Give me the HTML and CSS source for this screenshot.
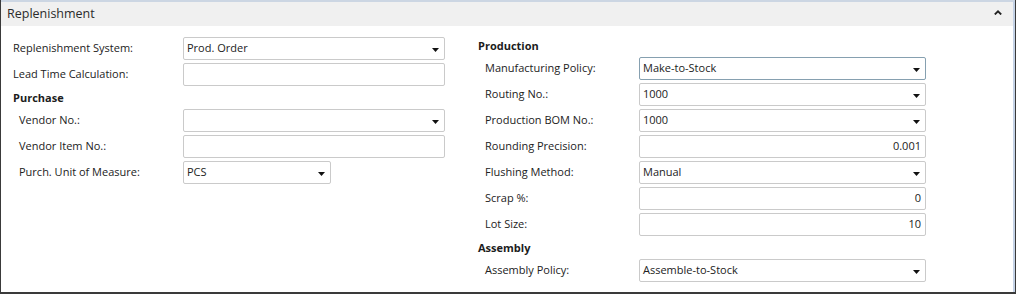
FILE: index.html
```html
<!DOCTYPE html>
<html lang="en">
<head>
	<meta charset="UTF-8">
	<title>Replenishment</title>
	<link rel="stylesheet" href="styles.css">
</head>
<body>
	<div class="frame">
	  <div class="panel">
		<div class="panel-head">
		  <span class="panel-title">Replenishment</span>
		  <svg class="chevron" width="8" height="5" viewBox="0 0 8 5"><path d="M0.8 4.5 L4 1.3 L7.2 4.5" fill="none" stroke="#222" stroke-width="1.8"/></svg>
		</div>
		<div class="panel-body">
		  <div class="col col-left">
			<div class="row">
			  <div class="label">Replenishment System:</div>
			  <div class="field w-left select">Prod. Order<svg class="arrow" width="7" height="4" viewBox="0 0 7 4"><path d="M0 0 H7 L3.5 4 Z" fill="#111"/></svg></div>
			</div>
			<div class="row">
			  <div class="label">Lead Time Calculation:</div>
			  <div class="field w-left"></div>
			</div>
			<div class="group-title">Purchase</div>
			<div class="group">
			  <div class="row">
				<div class="label">Vendor No.:</div>
				<div class="field w-left select"><svg class="arrow" width="7" height="4" viewBox="0 0 7 4"><path d="M0 0 H7 L3.5 4 Z" fill="#111"/></svg></div>
			  </div>
			  <div class="row">
				<div class="label">Vendor Item No.:</div>
				<div class="field w-left"></div>
			  </div>
			  <div class="row">
				<div class="label">Purch. Unit of Measure:</div>
				<div class="field w-short select">PCS<svg class="arrow" width="7" height="4" viewBox="0 0 7 4"><path d="M0 0 H7 L3.5 4 Z" fill="#111"/></svg></div>
			  </div>
			</div>
		  </div>
		  <div class="col col-right">
			<div class="group-title">Production</div>
			<div class="group">
			  <div class="row">
				<div class="label">Manufacturing Policy:</div>
				<div class="field w-right select focus">Make-to-Stock<svg class="arrow" width="7" height="4" viewBox="0 0 7 4"><path d="M0 0 H7 L3.5 4 Z" fill="#111"/></svg></div>
			  </div>
			  <div class="row">
				<div class="label">Routing No.:</div>
				<div class="field w-right select">1000<svg class="arrow" width="7" height="4" viewBox="0 0 7 4"><path d="M0 0 H7 L3.5 4 Z" fill="#111"/></svg></div>
			  </div>
			  <div class="row">
				<div class="label">Production BOM No.:</div>
				<div class="field w-right select">1000<svg class="arrow" width="7" height="4" viewBox="0 0 7 4"><path d="M0 0 H7 L3.5 4 Z" fill="#111"/></svg></div>
			  </div>
			  <div class="row">
				<div class="label">Rounding Precision:</div>
				<div class="field w-right num">0.001</div>
			  </div>
			  <div class="row">
				<div class="label">Flushing Method:</div>
				<div class="field w-right select">Manual<svg class="arrow" width="7" height="4" viewBox="0 0 7 4"><path d="M0 0 H7 L3.5 4 Z" fill="#111"/></svg></div>
			  </div>
			  <div class="row">
				<div class="label">Scrap %:</div>
				<div class="field w-right num">0</div>
			  </div>
			  <div class="row">
				<div class="label">Lot Size:</div>
				<div class="field w-right num">10</div>
			  </div>
			</div>
			<div class="group-title">Assembly</div>
			<div class="group">
			  <div class="row">
				<div class="label">Assembly Policy:</div>
				<div class="field w-right select">Assemble-to-Stock<svg class="arrow" width="7" height="4" viewBox="0 0 7 4"><path d="M0 0 H7 L3.5 4 Z" fill="#111"/></svg></div>
			  </div>
			</div>
		  </div>
		</div>
	  </div>
	</div>
</body>
</html>
```
FILE: styles.css
```css
html, body {
	margin: 0;
	padding: 0;
	background: #fff;
}
body {
	font-family: 'Open Sans', 'Noto Sans', sans-serif;
	font-size: 11px;
	color: #222;
}
.frame {
	width: 1016px;
	height: 294px;
	box-sizing: border-box;
	border-left: 1px solid #3a3a3a;
	border-right: 1px solid #3a3a3a;
	border-bottom: 2px solid #3a3a3a;
}
.panel {
	height: 100%;
	box-sizing: border-box;
	border-top: 2px solid #ccd6e3;
	border-right: 2px solid #c4d2e6;
}
.panel-head {
	height: 24px;
	background: #f0f0f0;
	display: flex;
	align-items: center;
	justify-content: space-between;
	padding: 0 11px 0 6px;
}
.panel-title {
	font-size: 12.5px;
	color: #2b2b2b;
	margin-top: -1px;
}
.chevron {
	display: block;
	margin-top: -3px;
}
.panel-body {
	display: flex;
	padding: 8px 0 0 12px;
}
.col-left {
	width: 465px;
}
.col-right {
	flex: 1;
}
.row {
	display: flex;
	align-items: center;
	height: 23px;
	margin-top: 3px;
}
.label {
	width: 170px;
	flex-shrink: 0;
	white-space: nowrap;
	padding-bottom: 2px;
}
.group-title {
	height: 20px;
	box-sizing: border-box;
	padding-top: 4px;
	line-height: 16px;
	font-weight: bold;
	color: #1c1c1c;
}
.col-left .group {
	padding-left: 6px;
}
.col-left .group .label {
	width: 164px;
}
.col-right .group {
	padding-left: 7px;
}
.col-right .group .label {
	width: 154px;
}
.field {
	height: 23px;
	box-sizing: border-box;
	border: 1px solid #cacaca;
	border-radius: 2px;
	background: #fff;
	padding: 0 4px 2px 3px;
	display: flex;
	align-items: center;
	white-space: nowrap;
}
.field.focus {
	border-color: #86a0b0;
}
.select {
	padding-right: 5px;
}
.num {
	justify-content: flex-end;
}
.arrow {
	display: block;
	margin-left: auto;
	margin-top: 4px;
}
.w-left {
	width: 262px;
}
.w-short {
	width: 148px;
}
.w-right {
	width: 287px;
}
```
